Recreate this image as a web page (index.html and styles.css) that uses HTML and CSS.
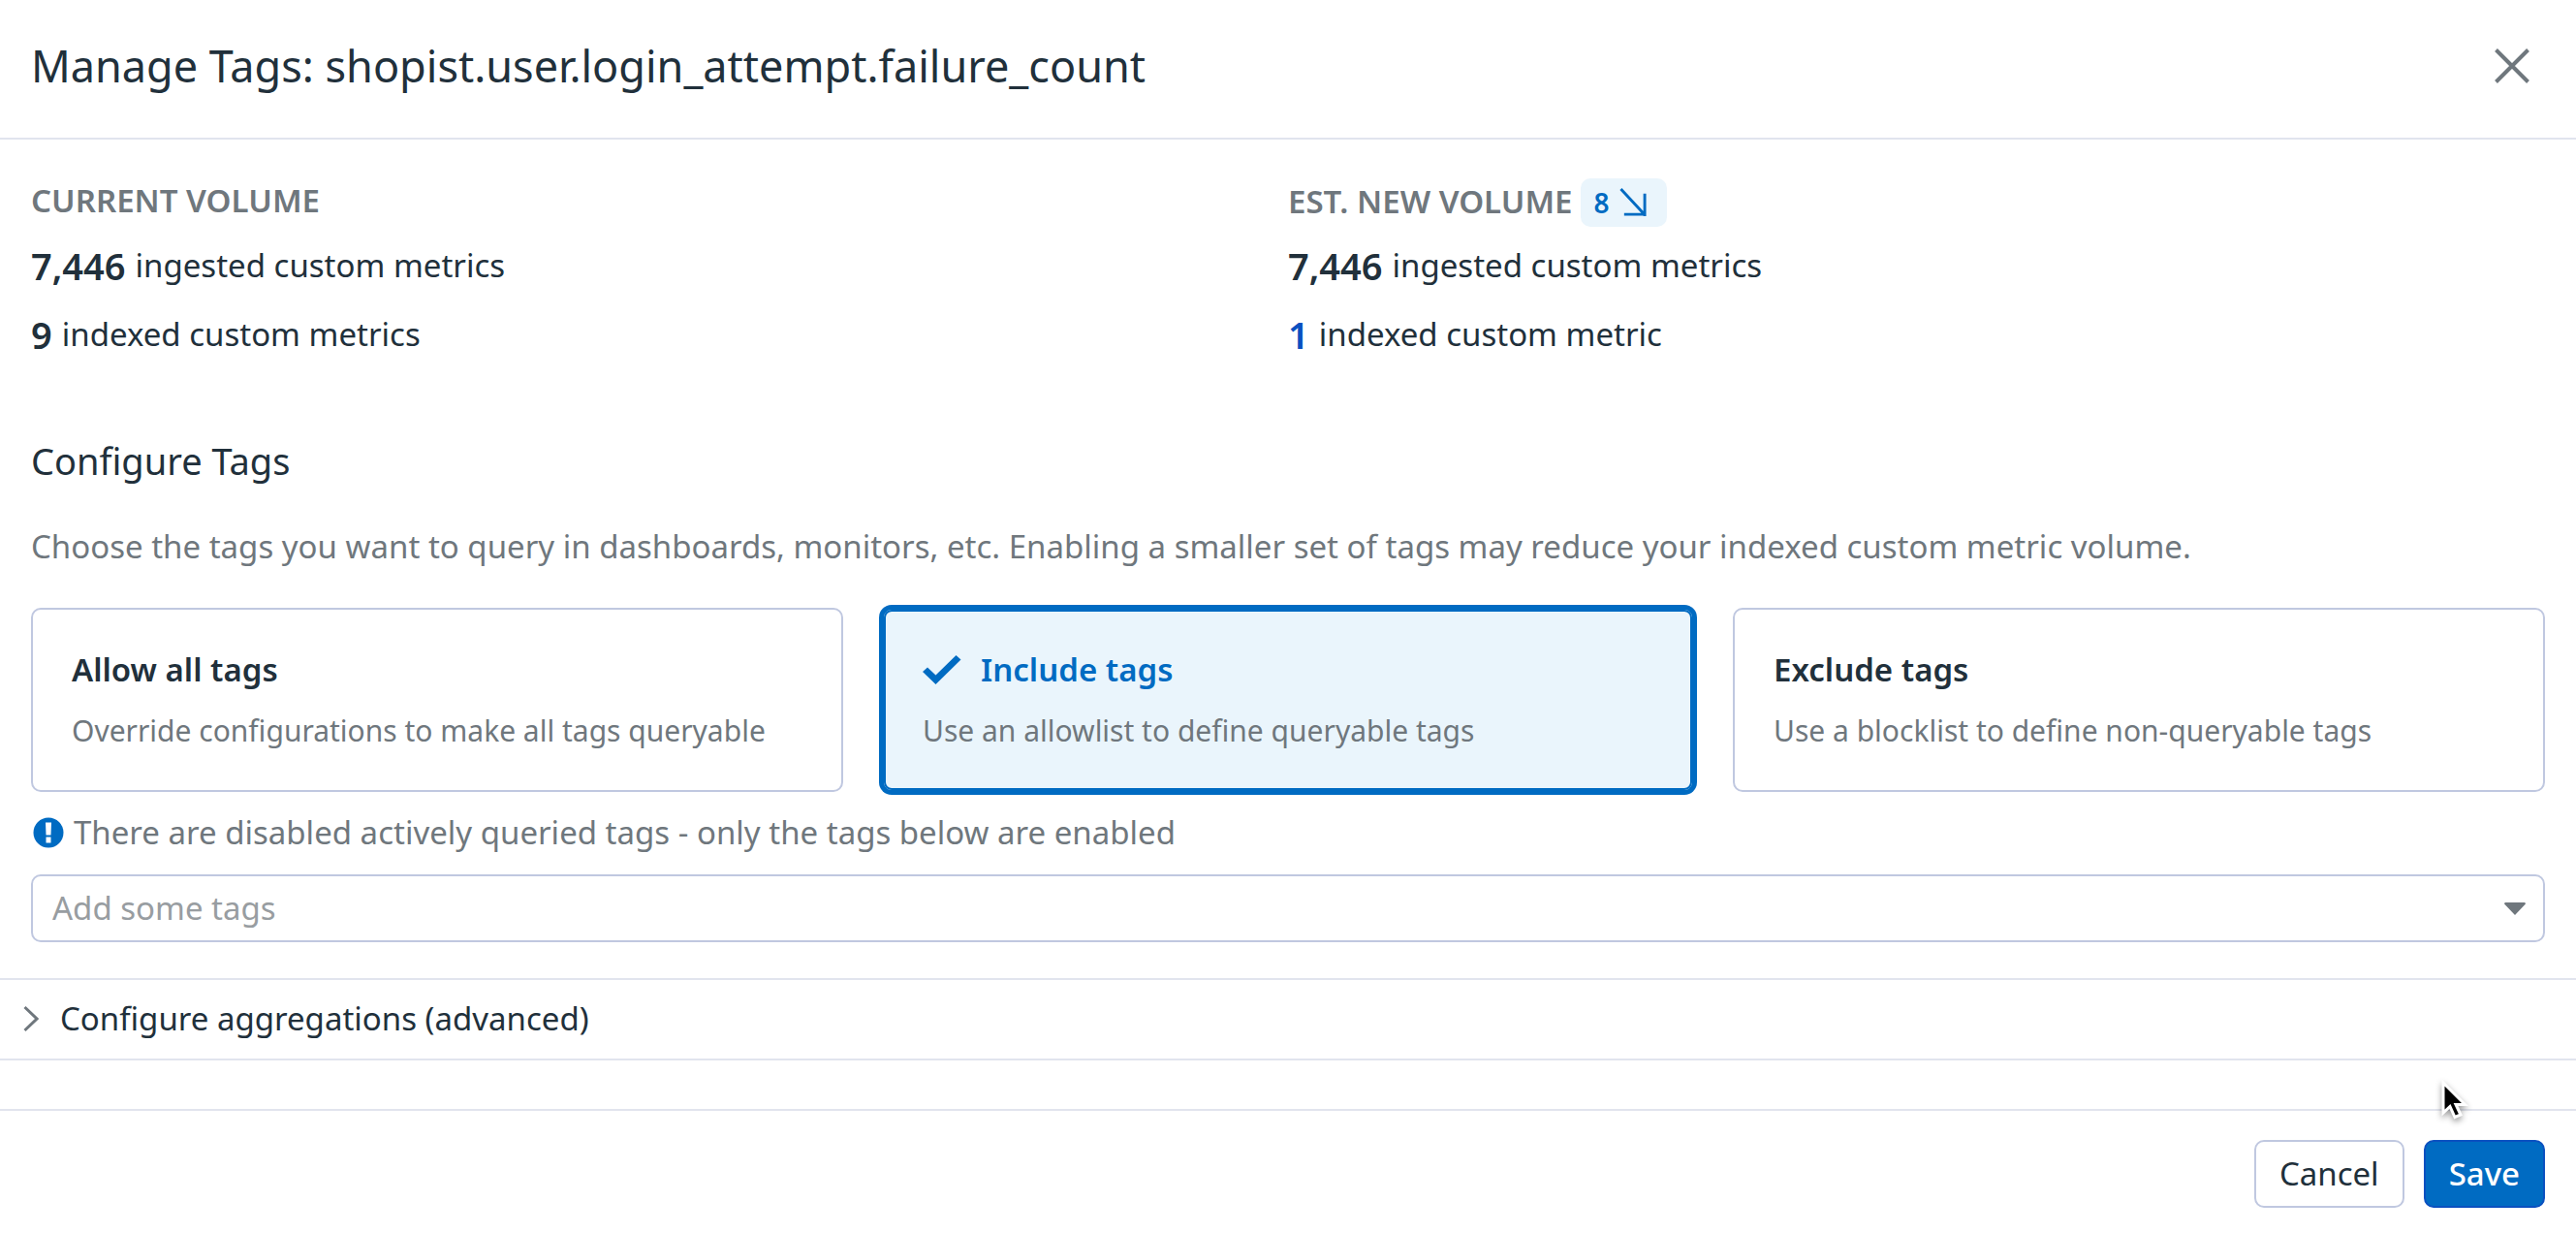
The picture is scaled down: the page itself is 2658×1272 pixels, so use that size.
FILE: index.html
```html
<!DOCTYPE html>
<html lang="en">
<head>
<meta charset="utf-8">
<title>Manage Tags</title>
<link rel="stylesheet" href="styles.css">
</head>
<body>
<main class="panel">
  <header class="panel-header">
    <h1 class="panel-title">Manage Tags: shopist.user.login_attempt.failure_count</h1>
    <button class="close-button" type="button" aria-label="Close">
      <svg class="close-icon" viewBox="0 0 36 36" aria-hidden="true"><path d="M1.5 1.5l33 33M34.5 1.5l-33 33"/></svg>
    </button>
  </header>

  <section class="volumes">
    <div class="volume">
      <h2 class="volume-heading">CURRENT VOLUME</h2>
      <p class="metric"><strong class="metric-count">7,446</strong> ingested custom metrics</p>
      <p class="metric"><strong class="metric-count">9</strong> indexed custom metrics</p>
    </div>
    <div class="volume">
      <h2 class="volume-heading">EST. NEW VOLUME
        <span class="badge">8
          <svg class="badge-icon" viewBox="0 0 30 32" aria-hidden="true"><path d="M1.5 1.5L26 28M27 6.500V30.500M5 28.500H28.500"/></svg>
        </span>
      </h2>
      <p class="metric"><strong class="metric-count">7,446</strong> ingested custom metrics</p>
      <p class="metric"><strong class="metric-count changed">1</strong> indexed custom metric</p>
    </div>
  </section>

  <form class="tag-form">
    <section class="configure">
      <h2 class="section-title">Configure Tags</h2>
      <p class="section-text">Choose the tags you want to query in dashboards, monitors, etc. Enabling a smaller set of tags may reduce your indexed custom metric volume.</p>
      <div class="options" role="radiogroup" aria-label="Tag mode">
        <label class="option">
          <input class="option-input" type="radio" name="mode" value="all">
          <span class="option-title">Allow all tags</span>
          <span class="option-text">Override configurations to make all tags queryable</span>
        </label>
        <label class="option">
          <input class="option-input" type="radio" name="mode" value="include" checked>
          <span class="option-title">
            <svg class="check-icon" viewBox="0 0 40 30" aria-hidden="true"><path d="M0 17L5 12.500L13.500 20.500L34.500 0L39.500 4.500L13.500 30Z"/></svg>
            Include tags</span>
          <span class="option-text">Use an allowlist to define queryable tags</span>
        </label>
        <label class="option">
          <input class="option-input" type="radio" name="mode" value="exclude">
          <span class="option-title">Exclude tags</span>
          <span class="option-text">Use a blocklist to define non-queryable tags</span>
        </label>
      </div>
      <label class="notice" for="tags">
        <svg class="notice-icon" viewBox="0 0 32 32" aria-hidden="true"><circle cx="16" cy="16" r="15.500"/><path d="M13 5.500h6l-.5 13h-5zM13.500 20.500h5v6h-5z"/></svg>
        There are disabled actively queried tags - only the tags below are enabled
      </label>
      <div class="select-wrap">
        <select class="tag-select" id="tags"><option>Add some tags</option></select>
        <svg class="caret-icon" viewBox="0 0 22 13" aria-hidden="true"><path d="M1 0h20q1.500 1 .5 2L11 13L.5 2Q-.5 1 1 0z"/></svg>
      </div>
    </section>

    <details class="advanced">
      <summary class="advanced-summary">
        <svg class="chevron-icon" viewBox="0 0 16 28" aria-hidden="true"><path d="M1.500 2L14 14L1.500 26"/></svg>
        Configure aggregations (advanced)
      </summary>
    </details>

    <footer class="panel-footer">
      <button class="button" type="button">Cancel</button>
      <button class="button primary" type="submit">Save</button>
    </footer>
  </form>
  <svg class="cursor" viewBox="0 0 30 44" aria-hidden="true"><path d="M3 3V34L10 27.500L15 38.500L21 36L16 25.500H25.500Z"/></svg>
</main>
</body>
</html>
```

FILE: styles.css
```css
:root {
  --text: #21303b;
  --muted: #6f777d;
  --blue: #006bc2;
  --blue-dark: #0a50c0;
  --blue-pale: #eaf5fc;
  --border: #c0c8e0;
  --rule: #e1e4ee;
}

* { box-sizing: border-box; }

body {
  margin: 0;
  background: #fff;
  color: var(--text);
  font-family: "Noto Sans", sans-serif;
  font-size: 33px;
  line-height: 46px;
}

h1, h2, p { margin: 0; }

button, select { font: inherit; color: inherit; }

.panel { position: relative; }

.panel-header {
  display: flex;
  align-items: center;
  justify-content: space-between;
  padding: 37px 48px 43px 32px;
  border-bottom: 2px solid var(--rule);
}

.panel-title {
  font-size: 45px;
  line-height: 62px;
  font-weight: 400;
}

.close-button {
  display: flex;
  padding: 0;
  border: 0;
  background: none;
}

.close-icon {
  width: 36px;
  height: 36px;
  fill: none;
  stroke: var(--muted);
  stroke-width: 4;
}

.volumes {
  display: grid;
  grid-template-columns: 1fr 1fr;
  padding: 40px 32px 0;
}

.volume-heading {
  display: flex;
  align-items: baseline;
  gap: 8px;
  height: 50px;
  margin-bottom: 16px;
  color: var(--muted);
  font-size: 33px;
  font-weight: 600;
}

.badge {
  display: flex;
  align-items: center;
  gap: 10px;
  padding: 0 20px 0 14px;
  border-radius: 10px;
  background: var(--blue-pale);
  color: var(--blue);
  font-size: 28px;
  line-height: 50px;
}

.badge-icon {
  width: 29px;
  height: 32px;
  fill: none;
  stroke: currentColor;
  stroke-width: 3;
}

.metric {
  display: flex;
  align-items: center;
  gap: 10px;
  line-height: 48px;
}

.metric + .metric { margin-top: 23px; }

.metric-count {
  font-size: 38px;
  font-weight: 600;
}

.changed { color: var(--blue-dark); }

.configure { padding: 80px 32px 37px; }

.section-title {
  margin-bottom: 40px;
  font-size: 38px;
  line-height: 52px;
  font-weight: 400;
}

.section-text {
  margin-bottom: 40px;
  color: var(--muted);
}

.options {
  display: grid;
  grid-template-columns: repeat(3, 1fr);
  gap: 40px;
}

.option {
  display: flex;
  flex-direction: column;
  gap: 18px;
  padding: 39px 40px;
  border: 2px solid var(--border);
  border-radius: 10px;
}

.option-input {
  position: absolute;
  opacity: 0;
}

.option:has(:checked) {
  border-color: var(--blue);
  background: var(--blue-pale);
  box-shadow: 0 0 0 3px var(--blue), inset 0 0 0 2px var(--blue);
}

.option-title {
  display: flex;
  align-items: center;
  gap: 20px;
  font-weight: 600;
}

.option:has(:checked) .option-title { color: var(--blue); }

.option-text {
  color: var(--muted);
  font-size: 30px;
  line-height: 44px;
}

.check-icon {
  width: 40px;
  height: 30px;
  fill: currentColor;
}

.notice {
  display: flex;
  align-items: center;
  gap: 10px;
  margin: 19px 0 20px;
  padding-left: 2px;
  color: var(--muted);
}

.notice-icon {
  width: 32px;
  height: 32px;
  fill: var(--blue);
}

.notice-icon path { fill: #fff; }

.select-wrap {
  display: grid;
  align-items: center;
}

.select-wrap > * { grid-area: 1 / 1; }

.tag-select {
  width: 100%;
  height: 70px;
  padding: 0 20px;
  border: 2px solid var(--border);
  border-radius: 10px;
  background: #fff;
  color: #989da1;
  appearance: none;
}

.caret-icon {
  justify-self: end;
  width: 22px;
  height: 13px;
  margin-right: 20px;
  fill: var(--muted);
  pointer-events: none;
}

.advanced {
  margin-bottom: 50px;
  border: solid var(--rule);
  border-width: 2px 0;
}

.advanced-summary {
  display: flex;
  align-items: center;
  gap: 22px;
  padding: 17px 24px 18px;
  list-style: none;
}

.chevron-icon {
  width: 16px;
  height: 28px;
  fill: none;
  stroke: var(--muted);
  stroke-width: 3;
}

.panel-footer {
  display: flex;
  justify-content: flex-end;
  gap: 20px;
  padding: 30px 32px 26px;
  border-top: 2px solid var(--rule);
}

.button {
  height: 70px;
  padding: 0 24px;
  border: 2px solid var(--border);
  border-radius: 10px;
  background: #fff;
}

.primary {
  border-color: var(--blue-dark);
  background: var(--blue);
  color: #fff;
  font-weight: 500;
}

.cursor {
  position: absolute;
  right: 110px;
  bottom: 114px;
  width: 30px;
  height: 44px;
  fill: #000;
  stroke: #fff;
  stroke-width: 3;
  filter: drop-shadow(0 3px 3px rgb(0 0 0 / 40%));
}
```
